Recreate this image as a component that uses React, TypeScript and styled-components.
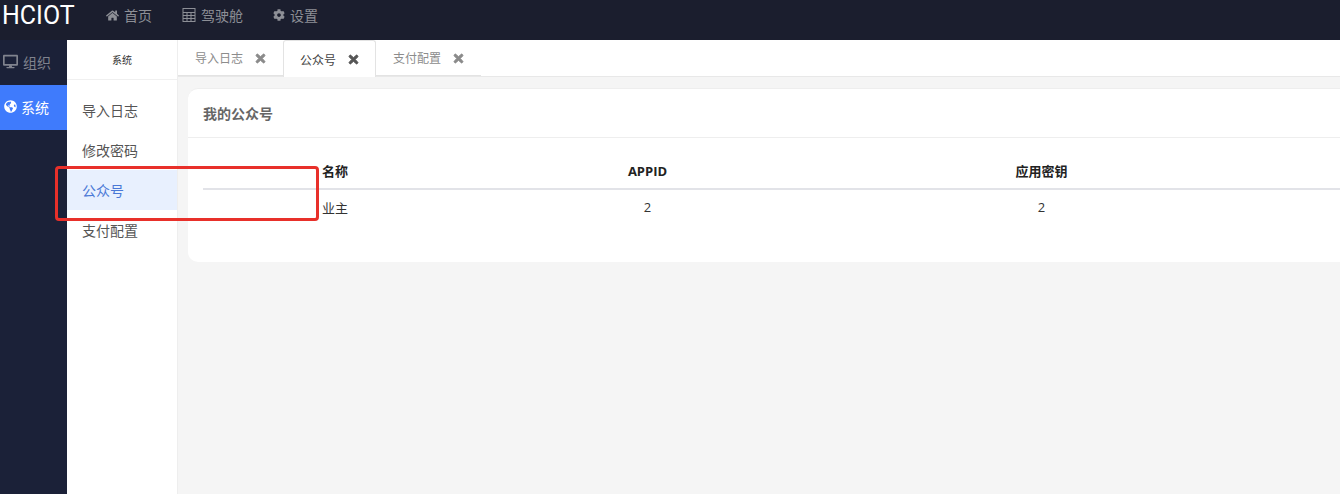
import React from 'react';
import styled, { createGlobalStyle } from 'styled-components';
import { FaHome, FaCog, FaDesktop, FaGlobeAmericas, FaTimes } from 'react-icons/fa';

const Global = createGlobalStyle`
  html, body { margin: 0; padding: 0; background: #f5f5f5; }
  body { font-family: "Open Sans", "Noto Sans CJK SC", sans-serif; }
  * { box-sizing: border-box; }
`;
const Page = styled.div`
  width: 1340px; height: 494px; overflow: hidden; position: relative;
  display: flex; flex-direction: column;
`;
const TopBar = styled.header`
  height: 40px; background: #1b1e2e; display: flex; align-items: center; flex: none; padding-bottom: 10px;
`;
const Logo = styled.div`
  width: 106px; padding-left: 2px; margin-top: 2px; color: #fff; font-size: 25px;
  font-family: Roboto, sans-serif; line-height: 28px;
`;
const TopLink = styled.div`
  display: flex; align-items: center; gap: 5px; color: #8d8f96; font-size: 14px; margin-right: 30px;
  svg { flex: none; }
`;
const Body = styled.div`display: flex; flex: 1; min-height: 0;`;
const Rail = styled.nav`width: 67px; background: #1b2138; flex: none;`;
const RailItem = styled.div<{ $active?: boolean }>`
  height: 45px; display: flex; align-items: center; gap: ${p => (p.$active ? 4 : 5)}px;
  padding: 0 0 2px ${p => (p.$active ? 4 : 3)}px;
  font-size: 14px; color: ${p => (p.$active ? '#fff' : '#80838e')};
  background: ${p => (p.$active ? '#3f7bfc' : 'transparent')};
`;
const SideMenu = styled.aside`
  width: 111px; background: #fff; border-right: 1px solid #eee; flex: none;
`;
const SideTitle = styled.div`
  height: 40px; display: flex; align-items: center; justify-content: center;
  font-size: 10px; color: #333; border-bottom: 1px solid #f0f0f0; margin-bottom: 10px;
`;
const SideItem = styled.div<{ $active?: boolean }>`
  height: 40px; display: flex; align-items: center; padding-left: 15px; font-size: 14px;
  color: ${p => (p.$active ? '#4a78d6' : '#555')};
  background: ${p => (p.$active ? '#e8f0fe' : 'transparent')};
`;
const Main = styled.main`flex: 1; min-width: 0; display: flex; flex-direction: column;`;
const Tabs = styled.div`
  height: 37px; background: #fff; display: flex; border-bottom: 1px solid #e8e8e8; flex: none;
`;
const Tab = styled.div<{ $active?: boolean; $w: number }>`
  width: ${p => p.$w}px; height: ${p => (p.$active ? 37 : 36)}px; display: flex; align-items: center;
  padding: 1px 0 0 17px;
  font-size: 12px; color: ${p => (p.$active ? '#444' : '#8c8c8c')};
  background: #fff; position: relative;
  ${p => p.$active ? 'border: 1px solid #e3e3e3; border-bottom: none; border-radius: 3px 3px 0 0; padding-left: 16px;' : 'border-bottom: 1px solid #e3e3e3;'}
`;
const TabClose = styled.span<{ $active?: boolean }>`
  margin-left: 11px; display: flex; color: ${p => (p.$active ? '#555' : '#8a8a8a')};
  svg { stroke: currentColor; stroke-width: 36px; }
`;
const Content = styled.div`flex: 1; padding: 11px 0 0 10px; overflow: hidden;`;
const Card = styled.section`
  width: 1300px; height: 174px; background: #fff; border-radius: 10px;
  border-top: 1px solid #eee;
`;
const CardHead = styled.div`
  height: 49px; display: flex; align-items: center; padding-left: 15px;
  font-size: 14px; font-weight: 700; color: #666; border-bottom: 1px solid #eee;
`;
const Table = styled.div`padding: 15px 0 0 15px;`;
const Row = styled.div<{ $head?: boolean }>`
  display: grid; grid-template-columns: 264px 361px 427px 1fr; align-items: center;
  height: ${p => (p.$head ? 37 : 34)}px;
  font-size: 13px; color: ${p => (p.$head ? '#222' : '#333')}; font-weight: ${p => (p.$head ? 700 : 400)};
  ${p => p.$head && 'border-bottom: 2px solid #e2e3e8;'}
`;
const Cell = styled.div`text-align: center;`;
const Highlight = styled.div`
  position: absolute; left: 55px; top: 166px; width: 264px; height: 55px;
  border: 3px solid #e8302a; border-radius: 4px; pointer-events: none;
`;

const Calc = () => (
  <svg width="14" height="14" viewBox="0 0 14 14" fill="none" stroke="#8d8f96" strokeWidth="1">
    <rect x="1" y="0.5" width="12" height="13" />
    <path d="M1 4.5h12M1 7.5h12M1 10.5h12M5 4.5v9M9 4.5v9" />
  </svg>
);

const tabs = [
  { label: '导入日志', w: 105 },
  { label: '公众号', w: 93, active: true },
  { label: '支付配置', w: 105 },
];

export default function App() {
  return (
    <Page>
      <Global />
      <TopBar>
        <Logo>HCIOT</Logo>
        <TopLink><FaHome size={13} />首页</TopLink>
        <TopLink><Calc />驾驶舱</TopLink>
        <TopLink><FaCog size={12} />设置</TopLink>
      </TopBar>
      <Body>
        <Rail>
          <RailItem><FaDesktop size={15} />组织</RailItem>
          <RailItem $active><FaGlobeAmericas size={13} />系统</RailItem>
        </Rail>
        <SideMenu>
          <SideTitle>系统</SideTitle>
          <SideItem>导入日志</SideItem>
          <SideItem>修改密码</SideItem>
          <SideItem $active>公众号</SideItem>
          <SideItem>支付配置</SideItem>
        </SideMenu>
        <Main>
          <Tabs>
            {tabs.map(t => (
              <Tab key={t.label} $w={t.w} $active={t.active}>
                {t.label}
                <TabClose $active={t.active}><FaTimes size={13} /></TabClose>
              </Tab>
            ))}
          </Tabs>
          <Content>
            <Card>
              <CardHead>我的公众号</CardHead>
              <Table>
                <Row $head><Cell>名称</Cell><Cell>APPID</Cell><Cell>应用密钥</Cell><Cell /></Row>
                <Row><Cell>业主</Cell><Cell>2</Cell><Cell>2</Cell><Cell /></Row>
              </Table>
            </Card>
          </Content>
        </Main>
      </Body>
      <Highlight />
    </Page>
  );
}
